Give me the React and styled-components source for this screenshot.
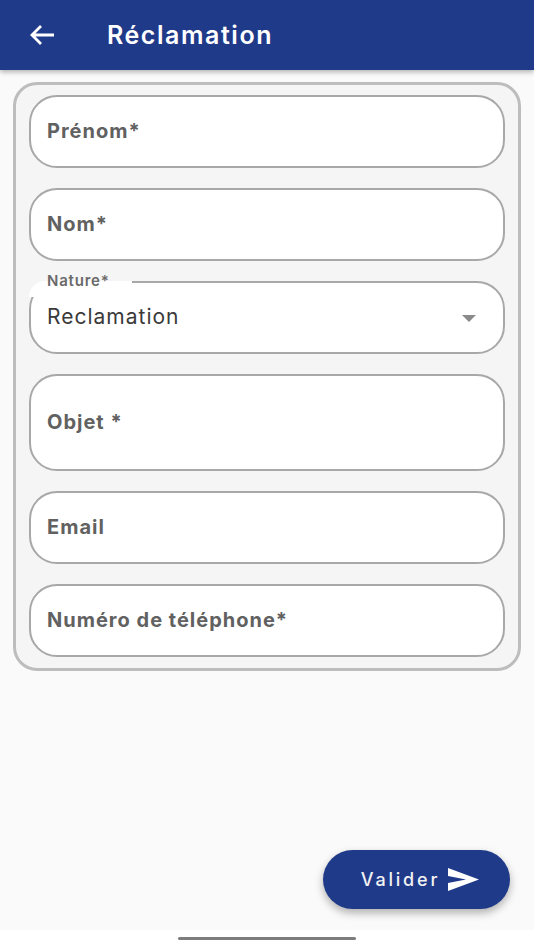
import React from 'react';
import styled, { createGlobalStyle } from 'styled-components';

const GlobalStyle = createGlobalStyle`
  html, body {
    margin: 0;
    padding: 0;
    background: #fff;
  }
  * {
    box-sizing: border-box;
  }
`;

const Screen = styled.div`
  width: 534px;
  height: 950px;
  display: flex;
  flex-direction: column;
  overflow: hidden;
  font-family: Inter, Roboto, "Liberation Sans", sans-serif;
  background: #fafafa;
`;

const Header = styled.header`
  height: 70px;
  flex-shrink: 0;
  display: flex;
  align-items: center;
  padding: 0 0 0 29px;
  background: #203a8a;
  color: #fff;
  box-shadow: 0 2px 5px rgba(0, 0, 0, 0.3);
  position: relative;
  z-index: 1;
`;

const BackButton = styled.div`
  width: 26px;
  height: 24px;
  margin-right: 52px;
  display: flex;
`;

const Title = styled.h1`
  margin: 0;
  font-size: 25px;
  font-weight: 600;
  letter-spacing: 1.55px;
`;

const Main = styled.main`
  flex: 1;
  display: flex;
  flex-direction: column;
  padding: 12px 13px 0;
`;

const Panel = styled.div`
  height: 589px;
  display: flex;
  flex-direction: column;
  gap: 20px;
  padding: 10px 13px;
  background: #f5f5f5;
  border: 3px solid #bdbdbd;
  border-radius: 24px;
`;

const Field = styled.div`
  position: relative;
  height: ${(p) => (p.$tall ? '97px' : '73px')};
  flex-shrink: 0;
  display: flex;
  align-items: center;
  justify-content: space-between;
  padding: 0 27px 2px 16px;
  background: #fff;
  border: 2px solid #a8a8a8;
  border-radius: 28px;
`;

const Placeholder = styled.span`
  font-size: 20px;
  font-weight: 700;
  letter-spacing: 1px;
  color: #616161;
`;

const Value = styled.span`
  position: relative;
  font-size: 21px;
  letter-spacing: 1px;
  color: #3a3a3a;
`;

const FloatingLabel = styled.label`
  position: absolute;
  left: 16px;
  top: -12px;
  font-size: 15px;
  font-weight: 600;
  letter-spacing: 0.8px;
  line-height: 20px;
  color: #6a6a6a;
  z-index: 1;
`;

const Notch = styled.span`
  position: absolute;
  left: -2px;
  top: -2px;
  width: 103px;
  height: 16px;
  background: #fff;
  border-radius: 16px 0 0 0;
  box-shadow: -1px -2px 0 #f5f5f5;
`;

const Arrow = styled.span`
  width: 0;
  height: 0;
  margin-top: 4px;
  border-left: 7px solid transparent;
  border-right: 7px solid transparent;
  border-top: 7px solid #8a8a8a;
`;

const Footer = styled.div`
  flex: 1;
  display: flex;
  justify-content: flex-end;
  align-items: flex-start;
  padding: 179px 11px 0 0;
`;

const SubmitButton = styled.button`
  width: 187px;
  height: 59px;
  display: flex;
  align-items: center;
  justify-content: center;
  gap: 8px;
  padding: 0 0 0 7px;
  border: none;
  border-radius: 30px;
  background: #203a8a;
  color: #f2f2f2;
  font-family: inherit;
  font-size: 18px;
  font-weight: 500;
  letter-spacing: 2.8px;
  box-shadow: 0 4px 8px rgba(0, 0, 0, 0.3);
`;

const NavBar = styled.div`
  height: 20px;
  flex-shrink: 0;
  display: flex;
  justify-content: center;
  padding-top: 7px;
  background: #fff;
`;

const HomeIndicator = styled.div`
  width: 178px;
  height: 3px;
  border-radius: 2px;
  background: #7d7d7d;
`;

const fields = [
  { label: 'Prénom*' },
  { label: 'Nom*' },
  { select: true },
  { label: 'Objet *', tall: true },
  { label: 'Email' },
  { label: 'Numéro de téléphone*' },
];

export default function App() {
  return (
    <Screen>
      <GlobalStyle />
      <Header>
        <BackButton>
          <svg width="26" height="24" viewBox="0 0 26 24" fill="none" stroke="#fff" strokeWidth="2.8">
            <path d="M25 12H3M12 3l-9 9 9 9" />
          </svg>
        </BackButton>
        <Title>Réclamation</Title>
      </Header>
      <Main>
        <Panel>
          {fields.map((f, i) =>
            f.select ? (
              <Field key={i}>
                <Notch />
                <FloatingLabel>Nature*</FloatingLabel>
                <Value>Reclamation</Value>
                <Arrow />
              </Field>
            ) : (
              <Field key={i} $tall={f.tall}>
                <Placeholder>{f.label}</Placeholder>
              </Field>
            )
          )}
        </Panel>
        <Footer>
          <SubmitButton>
            Valider
            <svg width="31" height="23" viewBox="0 0 31 23" fill="#fff">
              <path d="M0 0l31 11.500L0 23v-8l18-3.500L0 8z" />
            </svg>
          </SubmitButton>
        </Footer>
      </Main>
      <NavBar>
        <HomeIndicator />
      </NavBar>
    </Screen>
  );
}
